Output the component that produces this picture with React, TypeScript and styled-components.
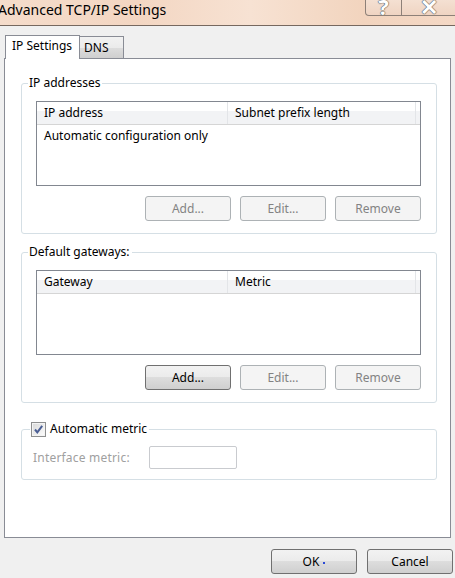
import React from "react";
import styled, { createGlobalStyle, css } from "styled-components";

const GlobalStyle = createGlobalStyle`
  html, body {
    margin: 0;
    padding: 0;
    background: #f0f0f0;
  }
  body {
    font-family: "Noto Sans", "Liberation Sans", sans-serif;
    font-size: 12px;
    color: #000;
  }
`;

const Window = styled.div`
  width: 455px;
  height: 578px;
  display: flex;
  flex-direction: column;
  overflow: hidden;
  background: #f0f0f0;
`;

const TitleBar = styled.div`
  height: 25px;
  display: flex;
  align-items: flex-start;
  justify-content: space-between;
  background: linear-gradient(90deg, #f5dccb 0%, #f3d6c2 30%, #f7e2d3 55%, #f2d4be 80%, #f4d8c5 100%);
  border-bottom: 1px solid #76685f;
`;

const Title = styled.div`
  font-size: 14px;
  line-height: 20px;
  margin-left: -2px;
  white-space: nowrap;
`;

const CaptionButtons = styled.div`
  display: flex;
  height: 16px;
  margin-right: -2px;
`;

const CaptionButton = styled.div<{ $wide?: boolean }>`
  width: ${(p) => (p.$wide ? "54px" : "35px")};
  height: 15px;
  border: 1px solid #8d8078;
  border-top: none;
  border-left: ${(p) => (p.$wide ? "none" : "1px solid #8d8078")};
  border-radius: ${(p) => (p.$wide ? "0" : "0 0 0 4px")};
  background: linear-gradient(180deg, #f4e0d2, #efd4c2);
  display: flex;
  justify-content: center;
  align-items: flex-end;
  overflow: hidden;
`;

const Body = styled.div`
  flex: 1;
  display: flex;
  flex-direction: column;
  padding: 9px 4px 0 4px;
`;

const TabRow = styled.div`
  display: flex;
  align-items: flex-end;
  margin-left: 1px;
  height: 23px;
`;

const Tab = styled.div<{ $active?: boolean }>`
  position: relative;
  border: 1px solid #898c95;
  border-bottom: none;
  display: flex;
  ${(p) =>
    p.$active
      ? css`
          height: 23px;
          padding: 0 7px 0 6px;
          background: #fff;
          z-index: 1;
          margin-bottom: -1px;
          align-items: flex-start;
          line-height: 20px;
        `
      : css`
          height: 21px;
          margin-left: -1px;
          background: linear-gradient(180deg, #f2f2f2 0%, #ebebeb 50%, #dddddd 51%, #cfcfcf 100%);
          padding: 0 14px 0 4px;
          line-height: 22px;
          align-items: flex-start;
        `}
`;

const Panel = styled.div`
  height: 480px;
  box-sizing: border-box;
  background: #fff;
  border: 1px solid #898c95;
  padding: 16px 13px 0 16px;
  display: flex;
  flex-direction: column;
`;

const Group = styled.fieldset<{ $gap?: number; $bottom?: number }>`
  margin: ${(p) => p.$gap ?? 0}px 0 0 0;
  border: 1px solid #d5dfe5;
  border-radius: 3px;
  padding: 0 15px ${(p) => p.$bottom ?? 12}px 14px;
  min-width: 0;
`;

const Legend = styled.legend<{ $check?: boolean }>`
  padding: 0 2px 0 1px;
  margin-left: ${(p) => (p.$check ? "-6px" : "-8px")};
  line-height: 16px;
  display: flex;
  align-items: center;
`;

const ListView = styled.div`
  margin-top: 10px;
  height: 83px;
  border: 1px solid #828790;
  background: #fff;
`;

const HeaderRow = styled.div`
  display: grid;
  grid-template-columns: 191px 1fr;
  height: 22px;
  border-bottom: 1px solid #d5d5d5;
  background: linear-gradient(180deg, #ffffff 0%, #ffffff 40%, #f2f3f5 41%, #f2f3f5 100%);
`;

const HeaderCell = styled.div<{ $last?: boolean }>`
  padding-left: 7px;
  line-height: 21px;
  border-right: 1px solid #e3e5e8;
  ${(p) =>
    p.$last &&
    css`
      margin-right: 4px;
    `}
`;

const Row = styled.div`
  padding: 3px 7px;
  line-height: 16px;
`;

const ButtonRow = styled.div`
  display: flex;
  justify-content: flex-end;
  gap: 9px;
  margin-top: 10px;
`;

const Button = styled.button<{ $disabled?: boolean }>`
  width: 86px;
  height: 25px;
  padding: 0;
  box-sizing: border-box;
  font-family: inherit;
  font-size: 12px;
  border-radius: 3px;
  ${(p) =>
    p.$disabled
      ? css`
          border: 1px solid #adb2b5;
          background: #f4f4f4;
          color: #838383;
        `
      : css`
          border: 1px solid #707070;
          background: linear-gradient(180deg, #f2f2f2 0%, #ebebeb 49%, #dddddd 50%, #cfcfcf 100%);
          color: #000;
        `}
`;

const CheckBox = styled.span`
  width: 15px;
  height: 15px;
  box-sizing: border-box;
  border: 1px solid #8e8f8f;
  background: linear-gradient(135deg, #d8d8d8, #fefefe);
  box-shadow: inset 0 0 0 1px #f4f4f4;
  display: inline-flex;
  align-items: center;
  justify-content: center;
  margin-right: 4px;
`;

const MetricRow = styled.div`
  display: flex;
  align-items: center;
  gap: 19px;
  margin-top: 9px;
  color: #a0a0a0;
`;

const MetricLabel = styled.span`
  margin-left: -3px;
  letter-spacing: 0.2px;
`;

const MetricInput = styled.div`
  width: 88px;
  height: 23px;
  box-sizing: border-box;
  border: 1px solid #c9cbcf;
  border-radius: 2px;
  background: #fff;
`;

const Footer = styled.div`
  display: flex;
  justify-content: flex-end;
  gap: 10px;
  margin-top: 11px;
  margin-right: -2px;
`;

const FocusDot = styled.span`
  display: inline-block;
  width: 2px;
  height: 2px;
  background: #2c4bd6;
  margin-left: 4px;
  vertical-align: middle;
`;

const Glyph = styled.span`
  font-size: 22px;
  line-height: 22px;
  font-weight: bold;
  color: #fff;
  margin-bottom: -2px;
  text-shadow: 0 0 1px #555, 0 0 1px #555, 0 0 1px #555;
`;

export default function App() {
  return (
    <Window>
      <GlobalStyle />
      <TitleBar>
        <Title>Advanced TCP/IP Settings</Title>
        <CaptionButtons>
          <CaptionButton>
            <Glyph>?</Glyph>
          </CaptionButton>
          <CaptionButton $wide>
            <Glyph>✕</Glyph>
          </CaptionButton>
        </CaptionButtons>
      </TitleBar>
      <Body>
        <TabRow>
          <Tab $active>IP Settings</Tab>
          <Tab>DNS</Tab>
        </TabRow>
        <Panel>
          <Group>
            <Legend>IP addresses</Legend>
            <ListView>
              <HeaderRow>
                <HeaderCell>IP address</HeaderCell>
                <HeaderCell $last>Subnet prefix length</HeaderCell>
              </HeaderRow>
              <Row>Automatic configuration only</Row>
            </ListView>
            <ButtonRow>
              <Button $disabled>Add...</Button>
              <Button $disabled>Edit...</Button>
              <Button $disabled>Remove</Button>
            </ButtonRow>
          </Group>
          <Group $gap={10}>
            <Legend>Default gateways:</Legend>
            <ListView>
              <HeaderRow>
                <HeaderCell>Gateway</HeaderCell>
                <HeaderCell $last>Metric</HeaderCell>
              </HeaderRow>
            </ListView>
            <ButtonRow>
              <Button>Add...</Button>
              <Button $disabled>Edit...</Button>
              <Button $disabled>Remove</Button>
            </ButtonRow>
          </Group>
          <Group $gap={18} $bottom={10}>
            <Legend $check>
              <CheckBox>
                <svg width="11" height="11" viewBox="0 0 11 11">
                  <path d="M2 5.5 L4.3 8.3 L9.2 1.8" fill="none" stroke="#4b5f95" strokeWidth="2" />
                </svg>
              </CheckBox>
              Automatic metric
            </Legend>
            <MetricRow>
              <MetricLabel>Interface metric:</MetricLabel>
              <MetricInput />
            </MetricRow>
          </Group>
        </Panel>
        <Footer>
          <Button>
            OK
            <FocusDot />
          </Button>
          <Button>Cancel</Button>
        </Footer>
      </Body>
    </Window>
  );
}
